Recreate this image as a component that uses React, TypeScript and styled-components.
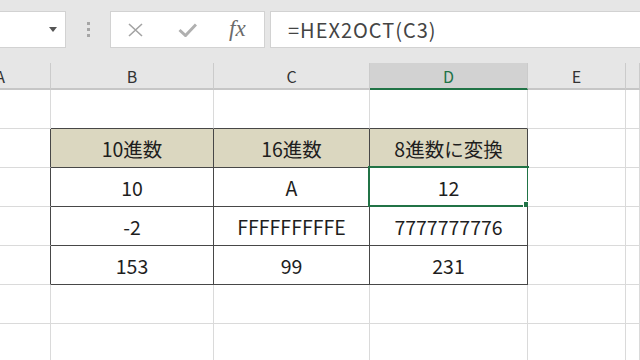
import React from 'react';
import styled, { createGlobalStyle } from "styled-components";

const GRID = '#dadada';
const DARK = '#474747';
const GREEN = '#217346';
const FONT = `"Noto Sans CJK JP", "Noto Sans", sans-serif`;

// F only shows its left edge in the view, so its label is left blank
const columns = ['A', 'B', 'C', 'D', 'E', ''];

const rows: string[][] = [
    ['', '', '', '', '', ''],
    ['', '10進数', '16進数', '8進数に変換', '', ''],
    ['', '10', 'A', '12', '', ''],
    ['', '-2', 'FFFFFFFFFE', '7777777776', '', ''],
    ['', '153', '99', '231', '', ''],
    ['', '', '', '', '', ''],
    ['', '', '', '', '', ''],
];

const inTable = (r: number, c: number) => r >= 1 && r <= 4 && c >= 1 && c <= 3;

export default function App() {
    return (
        <>
            <GlobalStyle/>
            <Toolbar>
                <NameBox>
                    <DropArrow/>
                </NameBox>
                <Grip>
                    <Dot/><Dot/><Dot/>
                </Grip>
                <FxBox>
                    <svg width="15" height="14" viewBox="0 0 15 14">
                        <path d="M1 1 L14 13 M14 1 L1 13" stroke="#a3a3a3" strokeWidth="1.6" fill="none"/>
                    </svg>
                    <CheckIcon width="19" height="14" viewBox="0 0 19 14">
                        <path d="M1.5 7 L7.5 12.5 L18 1.5" stroke="#b0b0b0" strokeWidth="3" fill="none"/>
                    </CheckIcon>
                    <FxLabel>fx</FxLabel>
                </FxBox>
                <FormulaBar>=HEX2OCT(C3)</FormulaBar>
            </Toolbar>
            <Sheet>
                {columns.map((col, i) => (
                    <ColHeader key={i} $active={col === 'D'}>{col}</ColHeader>
                ))}
                {rows.map((row, r) =>
                    row.map((text, c) => (
                        <Cell
                            key={`${r}-${c}`}
                            $right={(r >= 1 && r <= 4 && c <= 3) ? DARK : GRID}
                            $bottom={(c >= 1 && c <= 3 && r <= 4) ? DARK : GRID}
                            $fill={r === 1 && inTable(r, c) ? '#dbd7c0' : '#fff'}
                        >
                            {text}
                            {r === 2 && c === 3 && (
                                <Selection>
                                    <Handle/>
                                </Selection>
                            )}
                        </Cell>
                    ))
                )}
            </Sheet>
        </>
    );
}

const GlobalStyle = createGlobalStyle`
    body {
        margin: 0;
        background: #fff;
        overflow: hidden;
        font-family: ${FONT};
    }
`
const Toolbar = styled.div`
    height: 63px;
    background: #e6e6e6;
    display: flex;
    align-items: flex-start;
    padding-top: 11px;
    box-sizing: border-box;
`
const NameBox = styled.div`
    width: 66px;
    height: 37px;
    background: #fff;
    border: 1px solid #d2d2d2;
    border-left: none;
    box-sizing: border-box;
    display: flex;
    align-items: center;
    justify-content: flex-end;
    padding-right: 8px;
`
const DropArrow = styled.div`
    width: 0;
    height: 0;
    border-left: 4px solid transparent;
    border-right: 4px solid transparent;
    border-top: 5px solid #555;
`
const Grip = styled.div`
    width: 44px;
    display: flex;
    flex-direction: column;
    align-items: center;
    gap: 3px;
    padding-top: 11px;
`
const Dot = styled.div`
    width: 3px;
    height: 3px;
    background: #a6a6a6;
`
const FxBox = styled.div`
    width: 155px;
    height: 37px;
    background: #fff;
    border: 1px solid #d2d2d2;
    box-sizing: border-box;
    display: flex;
    align-items: center;
    padding-left: 17px;
`
const CheckIcon = styled.svg`
    margin-left: 35px;
`
const FxLabel = styled.span`
    margin-left: 32px;
    font-family: "Liberation Serif", serif;
    font-style: italic;
    font-size: 23px;
    color: #6b6b6b;
    line-height: 1;
    margin-top: -3px;
`
const FormulaBar = styled.div`
    flex: 1;
    margin-left: 5px;
    height: 37px;
    background: #fff;
    border: 1px solid #d2d2d2;
    border-right: none;
    box-sizing: border-box;
    display: flex;
    align-items: center;
    padding-left: 17px;
    font-size: 20px;
    color: #444;
    letter-spacing: 1px;
`
const Sheet = styled.div`
    display: grid;
    grid-template-columns: 101px 163px 156px 158px 98px 1fr;
    grid-template-rows: 27px;
    grid-auto-rows: 39px;
    margin-left: -50px;
    width: calc(100% + 50px);
`
const ColHeader = styled.div<{ $active: boolean }>`
    box-sizing: border-box;
    background: ${p => p.$active ? '#d2d2d2' : '#e6e6e6'};
    border-right: 1px solid #cbcbcb;
    border-bottom: 2px solid ${p => p.$active ? GREEN : '#c6c6c6'};
    display: flex;
    align-items: center;
    justify-content: center;
    font-size: 16px;
    color: ${p => p.$active ? GREEN : '#333'};
`
const Cell = styled.div<{ $right: string, $bottom: string, $fill: string }>`
    position: relative;
    box-sizing: border-box;
    background: ${p => p.$fill};
    border-right: 1px solid ${p => p.$right};
    border-bottom: 1px solid ${p => p.$bottom};
    display: flex;
    align-items: center;
    justify-content: center;
    font-size: 19.5px;
    color: #1e1e1e;
`
const Selection = styled.div`
    position: absolute;
    top: -2px;
    left: -2px;
    right: -2px;
    bottom: -1px;
    border: 2px solid ${GREEN};
`
const Handle = styled.div`
    position: absolute;
    right: -4px;
    bottom: -4px;
    width: 6px;
    height: 6px;
    background: ${GREEN};
    border: 1px solid #fff;
`
